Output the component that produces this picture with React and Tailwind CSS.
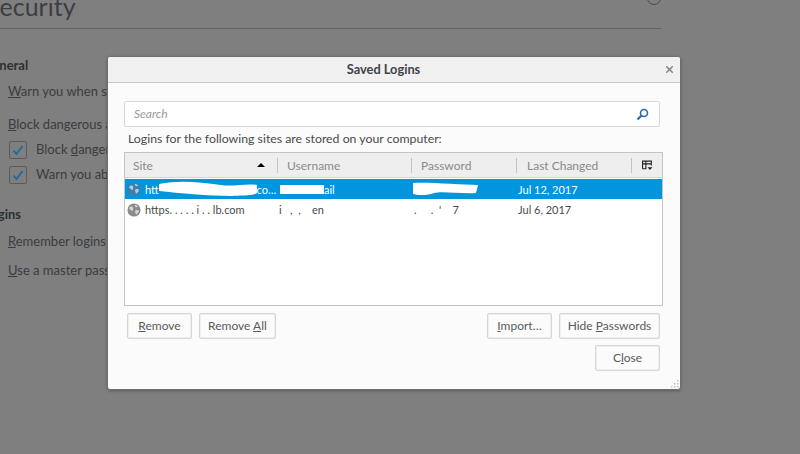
import React from "react";
import { X } from "lucide-react";

function Globe({ light }) {
  return (
    <svg width="14" height="14" viewBox="0 0 16 16" className="shrink-0">
      <circle cx="8" cy="8" r="7.500" fill={light ? "#3f7ea8" : "#8a8a8a"} />
      <path d="M3 4.500c2-.8 3.500-.4 4.200.8.500 1-.6 1.500-.3 2.500.4 1.200-1 1.600-1.800.8C4 7.500 3 7 2.500 6.500zM9 2c1.500.2 3 1 3.800 2.400-1 .2-1.600.8-2.600.4C9.400 4.400 8.500 3 9 2zM9.500 8.500c1.300-.7 3-.5 4.300.2-.2 2-1.500 3.800-3.300 4.600-.8-1-1.600-3.300-1-4.800z" fill={light ? "#a9cfe8" : "#d4d4d4"} />
    </svg>
  );
}

function Blob({ w, h = 12, d }) {
  return (
    <svg width={w} height={h} viewBox={`0 0 ${w} ${h}`} className="shrink-0" preserveAspectRatio="none">
      <path d={d} fill="#fff" />
    </svg>
  );
}

function Btn({ w, children }) {
  return (
    <button className={`${w} h-[26px] border border-[#d6d6d6] rounded-[2px] bg-[#fbfbfb] text-[12px] text-[#5a5a5a] flex items-center justify-center shadow-[0_0_0_1px_#efefef_inset]`}>
      {children}
    </button>
  );
}

function HeadCell({ w, children, last }) {
  return (
    <div className={`${w} h-full flex items-center pl-[9px] pt-px text-[12px] text-[#8a8a8a] relative`}>
      {children}
      {!last && <span className="absolute right-0 top-[5px] bottom-[4px] w-px bg-[#c4c4c4]" />}
    </div>
  );
}

function Check() {
  return (
    <span className="w-[18px] h-[18px] border border-[#5a5a5a] rounded-[2px] flex items-center justify-center shrink-0">
      <svg width="12" height="12" viewBox="0 0 12 12"><path d="M1.500 6.500 4.500 10 10.500 2" fill="none" stroke="#1e6a9a" strokeWidth="1.800" /></svg>
    </span>
  );
}

function Background() {
  return (
    <div className="h-full flex flex-col text-[#3a3c40] text-[13px]">
      <div className="h-[29px] w-[675px] -ml-[14px] border-b border-[#666] flex items-end relative">
        <span className="text-[25px] leading-[36px] text-[#3c3e42] whitespace-nowrap mb-[4px]">Security</span>
        <span className="absolute right-0 -top-[9px] w-[14px] h-[14px] rounded-full border border-[#4a4a4a]" />
      </div>
      <div className="-ml-[17px] mt-[26px] font-bold text-[#2e3034] leading-[20px]">General</div>
      <div className="ml-[8px] mt-[6px] leading-[20px] whitespace-nowrap"><u>W</u>arn you when sites try to install add-ons</div>
      <div className="ml-[8px] mt-[13px] leading-[20px] whitespace-nowrap"><u>B</u>lock dangerous and deceptive content</div>
      <div className="ml-[9px] mt-[6px] flex items-center gap-[9px] h-[19px] whitespace-nowrap">
        <Check />
        <span>Block <u>d</u>angerous downloads</span>
      </div>
      <div className="ml-[9px] mt-[6px] flex items-center gap-[9px] h-[19px] whitespace-nowrap">
        <Check />
        <span>Warn you about unwanted software</span>
      </div>
      <div className="-ml-[16px] mt-[20px] font-bold text-[#2e3034] leading-[20px]">Logins</div>
      <div className="ml-[8px] mt-[7px] leading-[20px] whitespace-nowrap"><u>R</u>emember logins for sites</div>
      <div className="ml-[8px] mt-[9px] leading-[20px] whitespace-nowrap"><u>U</u>se a master password</div>
    </div>
  );
}

export default function App() {
  return (
    <div className="w-[800px] h-[454px] bg-[#7f7f7f] relative overflow-hidden" style={{ fontFamily: 'Lato, "Open Sans", sans-serif' }}>
      <Background />

      <div className="absolute left-[107px] top-[56px] w-[574px] h-[334px] bg-[#fbfbfb] rounded-[3px] border border-[#6f6f6f] flex flex-col shadow-[0_1px_3px_rgba(0,0,0,0.3)]">
        <div className="h-[26px] bg-[#f0f0f0] border-b border-[#c8c8c8] flex items-center justify-center relative rounded-t-[3px] shrink-0">
          <span className="text-[12.800px] font-bold text-[#3f4348] pr-[21px] pt-px">Saved Logins</span>
          <X size={11} strokeWidth={3.500} className="absolute right-[5px] top-[7px] text-[#7d8a96]" />
        </div>

        <div className="flex-1 flex flex-col pl-[16px] pr-[17px]">
          <div className="mt-[18px] w-[536px] h-[26px] bg-white border border-[#d8d8d8] rounded-[2px] flex items-center justify-between pl-[9px] pr-[10px] shrink-0">
            <span className="text-[12px] italic text-[#9a9a9a]">Search</span>
            <svg width="13" height="13" viewBox="0 0 13 13" fill="none" stroke="#2a6aa8">
              <circle cx="8" cy="5" r="3.500" strokeWidth="1.600" />
              <path d="M5.300 7.700 1.500 11.500" strokeWidth="2.200" />
            </svg>
          </div>
          <div className="ml-[4px] mt-[4px] text-[12.300px] leading-[16px] text-[#4a4a4a] whitespace-nowrap">Logins for the following sites are stored on your computer:</div>

          <div className="mt-[5px] w-[539px] h-[154px] bg-white border border-[#c4c4c4] flex flex-col shrink-0">
            <div className="h-[25px] bg-[#eeeeee] border-b border-[#d4d4d4] flex shrink-0">
              <HeadCell w="w-[153px] !pl-[8px]">
                Site
                <span className="absolute left-[132px] top-[10px] w-0 h-0 border-x-[4px] border-x-transparent border-b-[4px] border-b-black" />
              </HeadCell>
              <HeadCell w="w-[134px]">Username</HeadCell>
              <HeadCell w="w-[105px]">Password</HeadCell>
              <HeadCell w="w-[115px] !pl-[10px]">Last Changed</HeadCell>
              <div className="flex-1 flex items-center justify-center">
                <svg width="11" height="11" viewBox="0 0 10 10" fill="none" stroke="#222" strokeWidth="1">
                  <path d="M.500 8V1H8.500V5M.500 3.500H8.500M3.500 1V8H.500" />
                  <path d="M5 6.500h4.500L7.250 9z" fill="#222" stroke="none" />
                </svg>
              </div>
            </div>

            <div className="h-[20px] mt-px bg-[#0095dd] flex items-center text-[11px] leading-[16px] text-white shrink-0">
              <div className="w-[153px] pl-[2px] flex items-center whitespace-nowrap">
                <Globe light />
                <span className="ml-[4px] pt-px">htt</span>
                <Blob w={98} h={16} d="M0 3C20-1 40 1 62 4c12 2 26-2 36 0V12c-6 4-22 2-26 3C50 15 20 12 0 10z" />
                <span className="pt-px">co…</span>
              </div>
              <div className="w-[134px] pl-[2px] flex items-center whitespace-nowrap">
                <Blob w={44} h={11} d="M0 1H44V10H0z" />
                <span className="pt-px">ail</span>
              </div>
              <div className="w-[105px] flex items-center">
                <Blob w={66} h={14} d="M1 1C16 0 50 3 66 3L64 11C50 12 30 9 22 11 15 14 4 13 1 12z" />
              </div>
              <div className="pl-[1px] pt-px">Jul 12, 2017</div>
            </div>

            <div className="h-[21px] flex items-center text-[11px] leading-[16px] text-[#4a4a4a] shrink-0">
              <div className="w-[153px] pl-[2px] flex items-center whitespace-pre">
                <Globe />
                <span className="ml-[4px] pt-px">https. . . . . i . . lb.com</span>
              </div>
              <div className="w-[134px] whitespace-pre pl-[1px] pt-px">i   ,  ,    en</div>
              <div className="w-[105px] whitespace-pre pl-[2px] pt-px">.     .  '    7</div>
              <div className="pl-[1px] pt-px">Jul 6, 2017</div>
            </div>
          </div>

          <div className="mt-[7px] ml-[3px] w-[533px] flex shrink-0">
            <Btn w="w-[65px] mr-[7px]"><span><u>R</u>emove</span></Btn>
            <Btn w="w-[77px]"><span>Remove <u>A</u>ll</span></Btn>
            <div className="flex-1" />
            <Btn w="w-[65px] mr-[7px]"><span><u>I</u>mport…</span></Btn>
            <Btn w="w-[101px]"><span>Hide <u>P</u>asswords</span></Btn>
          </div>
          <div className="mt-[6px] ml-[3px] w-[533px] flex justify-end shrink-0">
            <Btn w="w-[65px]"><span>C<u>l</u>ose</span></Btn>
          </div>
        </div>

        <svg width="8" height="8" viewBox="0 0 8 8" className="absolute right-[1px] bottom-[1px]" fill="#c4c4c4">
          <rect x="6" y="0" width="1.500" height="1.500" /><rect x="3" y="3" width="1.500" height="1.500" /><rect x="6" y="3" width="1.500" height="1.500" />
          <rect x="0" y="6" width="1.500" height="1.500" /><rect x="3" y="6" width="1.500" height="1.500" /><rect x="6" y="6" width="1.500" height="1.500" />
        </svg>
      </div>
    </div>
  );
}
